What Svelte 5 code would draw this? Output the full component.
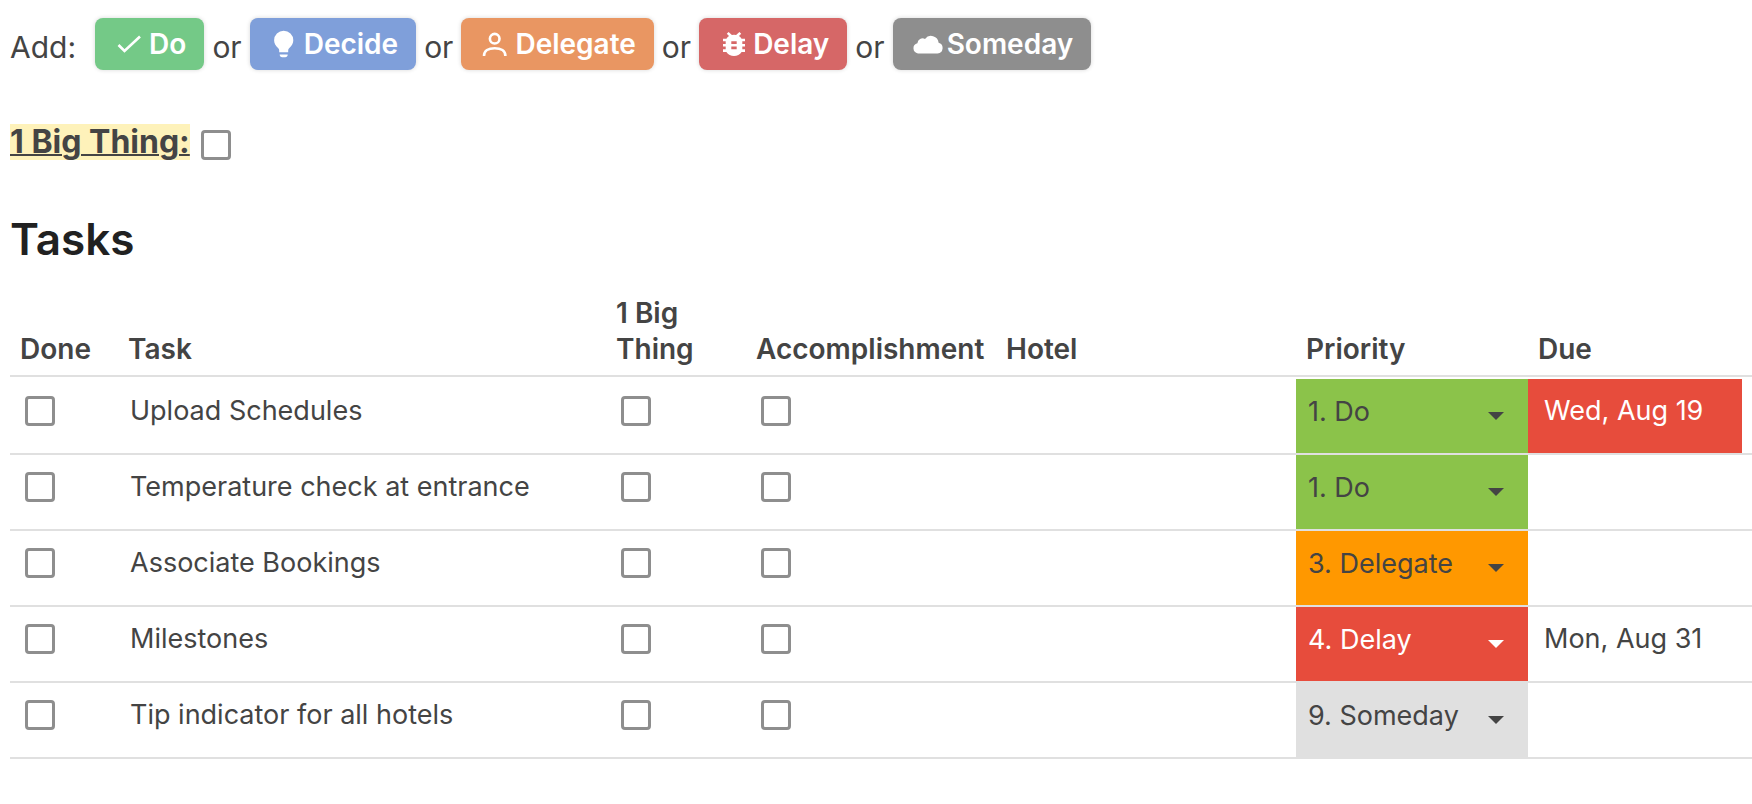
<script>
  let bigThing = false;

  const actions = [
    { label: "Do", icon: "check", color: "#74c987" },
    { label: "Decide", icon: "bulb", color: "#7f9fda" },
    { label: "Delegate", icon: "person", color: "#e99662" },
    { label: "Delay", icon: "bug", color: "#d66767" },
    { label: "Someday", icon: "cloud", color: "#8e8e8e" }
  ];

  const priorities = {
    "1. Do": "green",
    "3. Delegate": "orange",
    "4. Delay": "red",
    "9. Someday": "grey"
  };

  let tasks = [
    { name: "Upload Schedules", priority: "1. Do", due: "Wed, Aug 19", overdue: true },
    { name: "Temperature check at entrance", priority: "1. Do", due: "" },
    { name: "Associate Bookings", priority: "3. Delegate", due: "" },
    { name: "Milestones", priority: "4. Delay", due: "Mon, Aug 31" },
    { name: "Tip indicator for all hotels", priority: "9. Someday", due: "" }
  ].map(task => ({ ...task, done: false, big: false, accomplishment: false }));
</script>

<style>
  :global(body) {
    margin: 0;
    background-color: #fff;
  }

  main {
    padding: 18px 0 0 10px;
    color: #444;
    font-family: Inter, "Liberation Sans", sans-serif;
    font-size: 28px;
  }

  .add-row {
    display: flex;
    align-items: flex-end;
    gap: 8px;
    font-size: 30px;
    line-height: 46px;
  }

  .add-label {
    margin-right: 11px;
  }

  .action {
    display: flex;
    align-items: center;
    gap: 4px;
    height: 52px;
    padding: 0 18px;
    border: 0;
    border-radius: 8px;
    box-shadow: 0 0 4px rgba(0, 0, 0, 0.16);
    color: #fff;
    font-family: inherit;
    font-size: 28px;
    font-weight: 600;
    cursor: pointer;
  }

  .action svg {
    width: 32px;
    height: 32px;
  }

  .big-thing {
    display: flex;
    align-items: flex-end;
    gap: 11px;
    margin-top: 54px;
    font-size: 32px;
    line-height: 36px;
  }

  .big-thing label {
    background-color: #fef2ba;
    font-weight: 700;
    text-decoration: underline;
    text-decoration-thickness: 2px;
  }

  h2 {
    margin: 51px 0 28px;
    color: #212121;
    font-size: 44px;
    font-weight: 600;
    line-height: 56px;
  }

  input[type="checkbox"] {
    appearance: none;
    display: block;
    box-sizing: border-box;
    width: 30px;
    height: 30px;
    margin: 0;
    border: 3px solid #8e8e8e;
    border-radius: 4px;
    background-color: #fff;
  }

  input[type="checkbox"]:checked {
    background-color: #8e8e8e;
  }

  table {
    width: 100%;
    table-layout: fixed;
    border-spacing: 0;
  }

  th {
    padding: 0 10px 8px;
    border-bottom: 2px solid #e0e0e0;
    font-weight: 600;
    line-height: 36px;
    text-align: left;
    vertical-align: bottom;
  }

  td {
    padding: 0;
    border-bottom: 2px solid #e0e0e0;
    font-size: 27px;
  }

  tbody tr:first-child td {
    padding-top: 2px;
  }

  .cell {
    display: flex;
    box-sizing: border-box;
    height: 74px;
    padding: 14px 12px 0;
    line-height: 36px;
    white-space: nowrap;
  }

  .tick {
    padding: 17px 15px 0;
  }

  .due {
    padding-left: 16px;
    margin-right: 10px;
  }

  .priority {
    position: relative;
  }

  select {
    appearance: none;
    display: block;
    box-sizing: border-box;
    width: 100%;
    height: 74px;
    padding: 0 48px 10px 12px;
    border: 0;
    border-radius: 0;
    background-color: transparent;
    color: inherit;
    font-family: inherit;
    font-size: 27px;
  }

  .arrow {
    position: absolute;
    top: 33px;
    right: 24px;
    width: 16px;
    height: 8px;
    pointer-events: none;
  }

  .green {
    background-color: #8bc34a;
  }

  .orange {
    background-color: #ff9800;
  }

  .red {
    background-color: #e74c3c;
    color: #fff;
  }

  .grey {
    background-color: #e0e0e0;
  }

  .col-done {
    width: 108px;
  }

  .col-big {
    width: 140px;
  }

  .col-accomplishment {
    width: 250px;
  }

  .col-hotel {
    width: 300px;
  }

  .col-priority {
    width: 232px;
  }

  .col-due {
    width: 224px;
  }
</style>

<main>
  <div class="add-row">
    <span class="add-label">Add:</span>
    {#each actions as action, i}
      {#if i > 0}
        <span>or</span>
      {/if}
      <button class="action" type="button" style="background-color: {action.color}">
        <svg viewBox="0 0 32 32" fill="#fff" aria-hidden="true">
          {#if action.icon === "check"}
            <path d="M5.500 17l6 6L27 8.500" fill="none" stroke="#fff" stroke-width="2.6" />
          {:else if action.icon === "bulb"}
            <path d="M15.700 2.700a9.600 9.600 0 0 0-9.600 9.600c0 3.300 1.700 5.600 3.700 7.400 1 .9 1.400 1.700 1.400 3v1.600h9v-1.600c0-1.300.4-2.100 1.400-3 2-1.800 3.700-4.100 3.700-7.400a9.600 9.600 0 0 0-9.600-9.600zM11.700 26.500h8c0 1.800-1 2.700-2.500 2.700h-3c-1.500 0-2.500-.9-2.500-2.700z" />
          {:else if action.icon === "person"}
            <g fill="none" stroke="#fff" stroke-width="2.6">
              <circle cx="15.7" cy="10.7" r="4.8" />
              <path d="M5 27.900c0-5 4.500-7.700 10.700-7.700s10.700 2.700 10.700 7.700" />
            </g>
          {:else if action.icon === "bug"}
            <path d="M28 10.700h-3.400a8 8 0 0 0-2.600-2.800l2.200-2.200L22.400 4l-3.300 3.100a8 8 0 0 0-4.200 0L11.600 4 9.800 5.700 12 7.900a8 8 0 0 0-2.600 2.800H6v2.600h2.700V16H6v2.600h2.700v2.700H6v2.600h3.400a9 9 0 0 0 15.200 0H28v-2.600h-2.700v-2.700H28V16h-2.700v-2.700H28zM19.700 21.300h-5.400v-2.700h5.400zM19.700 16h-5.400v-2.700h5.400z" />
          {:else}
            <path d="M7 25.400a5.200 5.200 0 0 1-.6-10.200A5.300 5.300 0 0 1 14 10.900a7.600 7.600 0 0 1 13.600 3.900 5.400 5.400 0 0 1-1 10.600z" />
          {/if}
        </svg>
        {action.label}
      </button>
    {/each}
  </div>

  <div class="big-thing">
    <label for="big-thing">1 Big Thing:</label>
    <input id="big-thing" type="checkbox" bind:checked={bigThing} />
  </div>

  <h2>Tasks</h2>

  <table>
    <colgroup>
      <col class="col-done" />
      <col />
      <col class="col-big" />
      <col class="col-accomplishment" />
      <col class="col-hotel" />
      <col class="col-priority" />
      <col class="col-due" />
    </colgroup>
    <thead>
      <tr>
        <th>Done</th>
        <th>Task</th>
        <th>1 Big Thing</th>
        <th>Accomplishment</th>
        <th>Hotel</th>
        <th>Priority</th>
        <th>Due</th>
      </tr>
    </thead>
    <tbody>
      {#each tasks as task}
        <tr>
          <td>
            <div class="cell tick">
              <input type="checkbox" aria-label="Done" bind:checked={task.done} />
            </div>
          </td>
          <td><div class="cell">{task.name}</div></td>
          <td>
            <div class="cell tick">
              <input type="checkbox" aria-label="1 Big Thing" bind:checked={task.big} />
            </div>
          </td>
          <td>
            <div class="cell tick">
              <input type="checkbox" aria-label="Accomplishment" bind:checked={task.accomplishment} />
            </div>
          </td>
          <td></td>
          <td>
            <div class="priority {priorities[task.priority]}">
              <select aria-label="Priority" bind:value={task.priority}>
                {#each Object.keys(priorities) as option}
                  <option>{option}</option>
                {/each}
              </select>
              <svg class="arrow" viewBox="0 0 16 8" fill="currentColor" aria-hidden="true">
                <path d="M0 0h16L8 8z" />
              </svg>
            </div>
          </td>
          <td><div class="cell due" class:red={task.overdue}>{task.due}</div></td>
        </tr>
      {/each}
    </tbody>
  </table>
</main>
